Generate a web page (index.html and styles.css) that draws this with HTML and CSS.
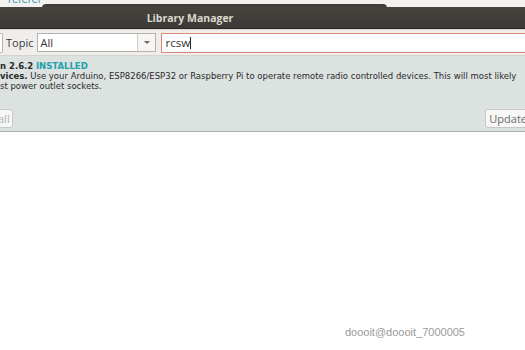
FILE: index.html
```html
<!DOCTYPE html>
<html lang="en">

<head>
  <meta charset="UTF-8">
  <meta name="viewport" content="width=device-width, initial-scale=1.0">
  <title>Library Manager</title>
  <link rel="stylesheet" href="styles.css">
</head>

<body>
  <div class="topstrip">
    <span class="behind">referer</span>
    <div class="tab"></div>
  </div>

  <div class="titlebar">
    <h1>Library Manager</h1>
  </div>

  <div class="toolbar">
    <div class="edge"></div>
    <span class="label">Topic</span>
    <div class="select">
      <span class="value">All</span>
      <span class="arrow"></span>
    </div>
    <div class="search">
      <span>rcsw</span><span class="caret"></span>
    </div>
  </div>

  <section class="lib-item">
    <p class="head"><b>n 2.6.2</b> <span class="installed">INSTALLED</span></p>
    <p><b>vices.</b> Use your Arduino, ESP8266/ESP32 or Raspberry Pi to operate remote radio controlled devices. This will most likely</p>
    <p>st power outlet sockets.</p>
    <div class="actions">
      <button class="btn left">all</button>
      <button class="btn right">Update</button>
    </div>
  </section>

  <div class="empty">
    <span class="mark">doooit@doooit_7000005</span>
  </div>
</body>

</html>
```

FILE: styles.css
```css
body {
  margin: 0;
  width: 525px;
  height: 350px;
  overflow: hidden;
  background-color: #ffffff;
  font-family: "DejaVu Sans", sans-serif;
}

.topstrip {
  position: relative;
  height: 7px;
  background-color: #f3f2f1;
  overflow: hidden;
}

.topstrip .behind {
  position: absolute;
  left: 8px;
  top: -6px;
  font-size: 10px;
  color: #3a9aa8;
}

.topstrip .tab {
  position: absolute;
  left: 42px;
  top: 4px;
  width: 345px;
  height: 6px;
  background-color: #403f3b;
  border-radius: 4px 4px 0 0;
}

.titlebar {
  height: 21px;
  background: linear-gradient(#45443f, #3b3a36);
  display: flex;
  align-items: center;
  justify-content: center;
  border-bottom: 1px solid #2c2b28;
}

.titlebar h1 {
  margin: 0 0 0 -145px;
  font-family: "Open Sans", sans-serif;
  font-size: 10.5px;
  font-weight: bold;
  color: #dcd8cf;
}

.toolbar {
  height: 25px;
  background-color: #efeeec;
  display: flex;
  align-items: center;
  border-top: 1px solid #d9d7d3;
  border-bottom: 1px solid #d6d4d0;
}

.toolbar .edge {
  width: 2px;
  height: 18px;
  border: 1px solid #b9b6b1;
  border-left: none;
  border-radius: 0 2px 2px 0;
  background-color: #ffffff;
}

.toolbar .label {
  margin-left: 3px;
  font-family: "Open Sans", sans-serif;
  font-size: 11px;
  color: #3c3c3c;
}

.select {
  margin-left: 4px;
  width: 117px;
  height: 17px;
  border: 1px solid #b4b1ac;
  background-color: #ffffff;
  display: flex;
  align-items: center;
}

.select .value {
  flex: 1;
  padding-left: 2px;
  font-family: "Open Sans", sans-serif;
  font-size: 11px;
  color: #333333;
}

.select .arrow {
  width: 17px;
  height: 17px;
  border-left: 1px solid #d0cdc8;
  background-color: #f7f6f5;
  display: flex;
  align-items: center;
  justify-content: center;
}

.select .arrow::after {
  content: "";
  border-left: 3px solid transparent;
  border-right: 3px solid transparent;
  border-top: 3px solid #6a6a6a;
}

.search {
  margin-left: 5px;
  flex: 1;
  height: 18px;
  border: 1px solid #d98a72;
  border-right: none;
  background-color: #ffffff;
  display: flex;
  align-items: center;
  padding-left: 3px;
  font-family: "Open Sans", sans-serif;
  font-size: 11.5px;
  color: #333333;
}

.search .caret {
  width: 1px;
  height: 12px;
  background-color: #222222;
}

.lib-item {
  height: 70px;
  padding-top: 5px;
  background-color: #dbe2e0;
  border-bottom: 1px solid #a9aeac;
  font-size: 8.5px;
  color: #2b2b2b;
}

.lib-item p {
  margin: 0;
  line-height: 10px;
  white-space: nowrap;
}

.installed {
  color: #23a1ac;
  font-weight: bold;
}

.actions {
  margin-top: 18px;
  display: flex;
  justify-content: space-between;
}

.btn {
  height: 19px;
  padding: 0 2px 0 3px;
  border: 1px solid #c6c9c8;
  border-radius: 3px;
  background-color: #f6f7f6;
  font-family: "Open Sans", sans-serif;
  font-size: 11px;
  color: #6b6b6b;
}

.btn.left {
  margin-left: -6px;
  color: #b0b0b0;
}

.btn.right {
  margin-right: -5px;
}

.empty {
  height: 216px;
  display: flex;
  justify-content: flex-end;
  align-items: flex-end;
}

.mark {
  margin: 0 60px 10px 0;
  font-family: "Liberation Sans", sans-serif;
  font-size: 11px;
  color: #9a9a9a;
}
```
